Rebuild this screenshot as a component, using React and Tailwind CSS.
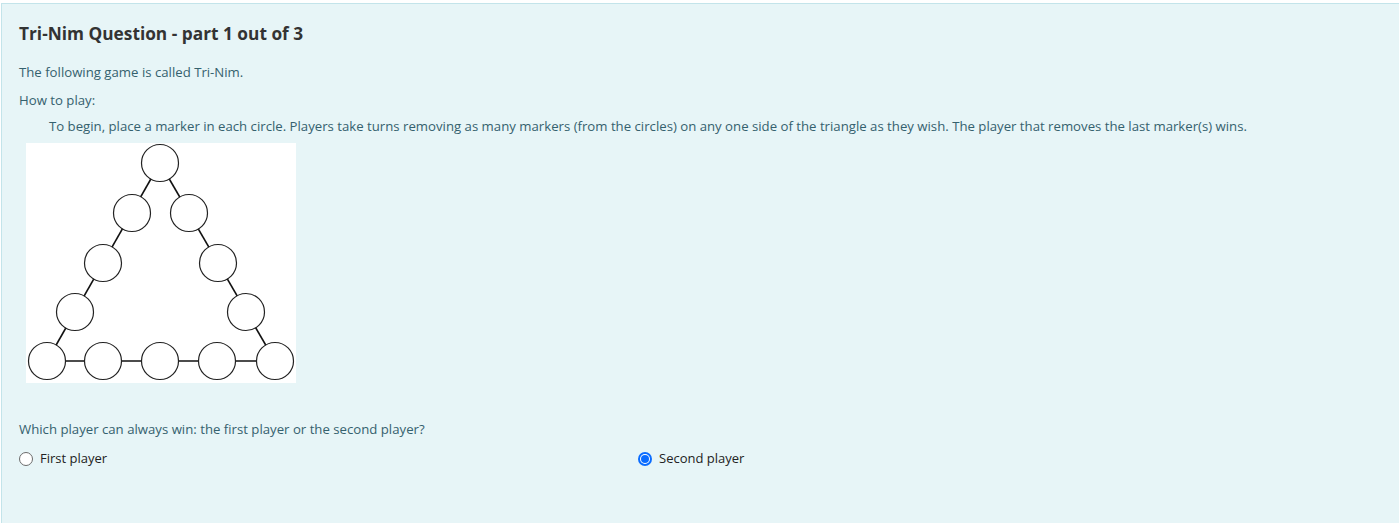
import { useState } from "react";

const circles = [
  [134, 20],
  [106, 70], [163, 70],
  [77, 120], [192, 120],
  [49, 169], [220, 169],
  [21, 218], [77, 218], [134, 218], [191, 218], [249, 218],
];

const TriNimBoard = () => {
  const top = [134, 20];
  const left = [21, 218];
  const right = [249, 218];
  return (
    <div className="w-[270px] h-[240px] bg-white ml-[7px]">
      <svg width="270" height="240" viewBox="0 0 270 240">
        <g stroke="#111" strokeWidth="1.6" fill="none">
          <line x1={top[0]} y1={top[1]} x2={left[0]} y2={left[1]} />
          <line x1={top[0]} y1={top[1]} x2={right[0]} y2={right[1]} />
          <line x1={left[0]} y1={left[1]} x2={right[0]} y2={right[1]} />
        </g>
        <g stroke="#222" strokeWidth="1.2" fill="#fff">
          {circles.map(([cx, cy], key) => (
            <circle key={key} cx={cx} cy={cy} r="18.5" />
          ))}
        </g>
      </svg>
    </div>
  );
};

const Radio = ({ checked, label, onClick }) => {
  return (
    <label onClick={onClick} className="flex items-center cursor-pointer">
      {checked ? (
        <span className="w-[14px] h-[14px] rounded-full bg-[#0a6cff] flex items-center justify-center">
          <span className="w-[10px] h-[10px] rounded-full bg-white flex items-center justify-center">
            <span className="w-[8px] h-[8px] rounded-full bg-[#0a6cff]"></span>
          </span>
        </span>
      ) : (
        <span className="w-[14px] h-[14px] rounded-full border border-[#6b6b6b] bg-white"></span>
      )}
      <span className="ml-[7px] text-[13px] text-[#222]">{label}</span>
    </label>
  );
};

export default function App() {
  const [answer, setAnswer] = useState("second");

  return (
    <div className="pt-[3px] font-['Open_Sans',sans-serif]">
      <div className="ml-px bg-[#e7f5f7] border border-[#c3e4ea] border-r-0 h-[540px] pl-[17px] pr-4 pt-[18px]">
        <h3 className="text-[17.3px] font-bold text-[#333] leading-[24px]">
          Tri-Nim Question - part 1 out of 3
        </h3>
        <div className="text-[13.2px] text-[#35616e] mt-[17px] leading-[18px]">
          <p>The following game is called Tri-Nim.</p>
          <p className="mt-[10px]">How to play:</p>
          <p className="mt-[8px] pl-[30px]">
            To begin, place a marker in each circle. Players take turns removing as many markers (from the circles) on any one side of the triangle as they wish. The player that removes the last marker(s) wins.
          </p>
        </div>
        <div className="mt-[8px]">
          <TriNimBoard />
        </div>
        <p className="text-[13.2px] text-[#35616e] mt-[37px] leading-[18px]">
          Which player can always win: the first player or the second player?
        </p>
        <div className="grid grid-cols-[619px_1fr] mt-[11px]">
          <Radio
            label="First player"
            checked={answer === "first"}
            onClick={() => setAnswer("first")}
          />
          <Radio
            label="Second player"
            checked={answer === "second"}
            onClick={() => setAnswer("second")}
          />
        </div>
      </div>
    </div>
  );
}
